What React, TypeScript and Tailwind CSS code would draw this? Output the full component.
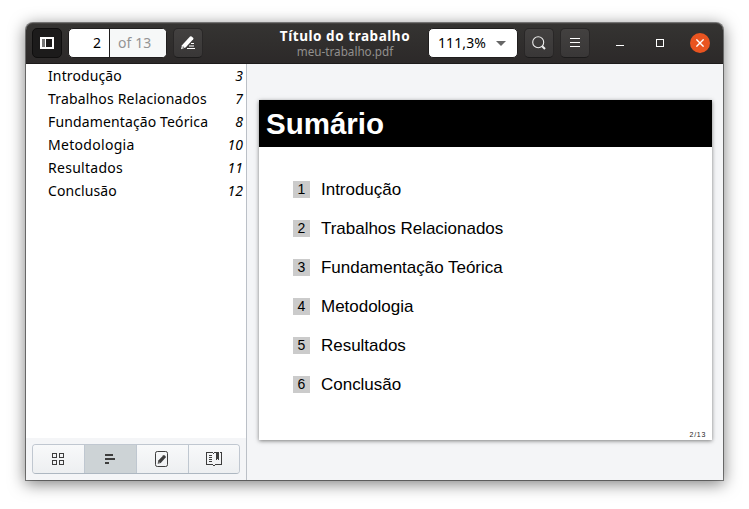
import type { ReactNode } from "react";

const sections = [
  { title: "Introdução", page: 3, side: "tracking-[0.12px]" },
  { title: "Trabalhos Relacionados", page: 7, side: "tracking-[0.17px]" },
  { title: "Fundamentação Teórica", page: 8, side: "tracking-[0.13px]" },
  { title: "Metodologia", page: 10, side: "tracking-[0.3px]" },
  { title: "Resultados", page: 11, side: "tracking-[0.28px]" },
  { title: "Conclusão", page: 12, side: "tracking-[0.1px]" },
];

function HeaderButton({ children, className = "" }: { children: ReactNode; className?: string }) {
  return (
    <button
      className={`flex h-[30px] w-[30px] shrink-0 items-center justify-center rounded-[5px] border border-[#292727] border-b-[#1c1b1b] bg-linear-to-b from-[#434140] to-[#393737] ${className}`}
    >
      {children}
    </button>
  );
}

function Header() {
  return (
    <header className="flex h-[41px] items-start rounded-t-[7px] border-b border-[#1d1b1b] bg-linear-to-b from-[#353432] to-[#2c2929] pt-[5px] pl-[6px] shadow-[inset_0_1px_0_#444240]">
      <button className="flex h-[30px] w-[30px] shrink-0 items-center justify-center rounded-[5px] border border-[#0f0e0e] bg-[#1c1b1b]">
        <svg width="14" height="12" viewBox="0 0 14 12" shapeRendering="crispEdges">
          <path d="M0 0h14v12H0z" fill="#fff" />
          <path d="M2 2h3v8H2z" fill="#777" />
          <path d="M6 2h6v8H6z" fill="#1c1b1b" />
        </svg>
      </button>
      <div className="ml-[6px] flex h-[30px] w-[99px] shrink-0 overflow-hidden rounded-[5px] border border-[#201e1e] bg-white text-[14px] leading-[28px]">
        <div className="w-[41px] border-r border-[#201e1e] pr-[8px] text-right text-black">2</div>
        <div className="flex-1 bg-[#f6f8f8] pl-[8px] text-[#949494] tracking-[0.1px]">of 13</div>
      </div>
      <HeaderButton className="ml-[6px]">
        <svg width="16" height="16" viewBox="0 0 16 16" fill="#fff">
          <path d="M1 14.2 2 10.3 10 1.6q.8-.7 1.6-.1l1.5 1.2q.8.7.1 1.6L5.6 12.6Z" />
          <path d="m2.8 11 1.7 1.5-2 1Z" fill="#777" />
          <path d="M11 8h3v1h-3zM9 10.5h5v1H9zM7 13h8v1H7z" />
        </svg>
      </HeaderButton>
      <div className="ml-[77px] flex w-[130px] shrink-0 flex-col items-center whitespace-nowrap">
        <div className="h-[16px] text-[13.5px] leading-[16px] font-bold tracking-[0.55px] text-white">Título do trabalho</div>
        <div className="h-[15px] text-[11.7px] leading-[15px] text-[#92908e]">meu-trabalho.pdf</div>
      </div>
      <div className="ml-[18px] flex h-[30px] w-[90px] shrink-0 items-center rounded-[5px] border border-[#201e1e] bg-white pl-[9px] text-[14px] leading-[28px] text-black">
        <span className="w-[49px] tracking-[0.1px]">111,3%</span>
        <svg className="ml-[9px]" width="10" height="5" viewBox="0 0 10 5"><path d="M0 0h10L5 5Z" fill="#666" /></svg>
      </div>
      <HeaderButton className="ml-[6px]">
        <svg width="16" height="16" viewBox="0 0 16 16" fill="none" stroke="#eee" strokeWidth="1.1">
          <circle cx="7.2" cy="7.2" r="5.5" />
          <path d="m11.2 11.2 2.8 2.8" strokeWidth="2" />
        </svg>
      </HeaderButton>
      <HeaderButton className="ml-[6px]">
        <svg width="10" height="10" viewBox="0 0 10 10" shapeRendering="crispEdges">
          <path d="M0 0h10v1H0zM0 4h10v1H0zM0 8h10v1H0z" fill="#fff" />
        </svg>
      </HeaderButton>
      <div className="ml-[26px] mt-[17px] h-px w-[8px] bg-white" />
      <div className="ml-[32px] mt-[11px] h-[8px] w-[8px] border border-white" />
      <div className="ml-[26px] mt-[5px] flex h-[20px] w-[20px] items-center justify-center rounded-full bg-[#e95420]">
        <svg width="8" height="8" viewBox="0 0 8 8" stroke="#fff" strokeWidth="1.4"><path d="m.4.4 7.2 7.2M7.6.4.4 7.6" /></svg>
      </div>
    </header>
  );
}

function Tab({ children, active = false }: { children: ReactNode; active?: boolean }) {
  return (
    <button
      className={`flex w-[52px] shrink-0 items-center justify-center border-r border-[#bfc7d0] pr-px last:w-[50px] last:border-r-0 last:pr-0 ${
        active ? "bg-[#cdd3d6]" : "bg-linear-to-b from-[#f8f9fa] to-[#edeff1]"
      }`}
    >
      {children}
    </button>
  );
}

function Sidebar() {
  return (
    <aside className="flex w-[221px] shrink-0 flex-col border-r border-[#bbc0c7] bg-white">
      <ul className="flex-1 pt-px">
        {sections.map((s) => (
          <li key={s.page} className="flex h-[23px] justify-between pr-[3px] pl-[22px] text-[14px] leading-[22px] text-black">
            <span className={s.side}>{s.title}</span>
            <span className="italic">{s.page}</span>
          </li>
        ))}
      </ul>
      <div className="h-[42px] bg-[#f4f5f7] p-[6px]">
        <div className="flex h-[30px] w-[208px] overflow-hidden rounded-[4px] border border-[#c0c7d0] border-b-[#adb7c1]">
          <Tab>
            <svg width="12" height="12" viewBox="0 0 12 12" fill="none" stroke="#3d3d3d" shapeRendering="crispEdges">
              <path d="M.5.5h4v4h-4zM7.5.5h4v4h-4zM.5 7.5h4v4h-4zM7.5 7.5h4v4h-4z" />
            </svg>
          </Tab>
          <Tab active>
            <svg width="10" height="10" viewBox="0 0 10 10" fill="#3d3d3d" shapeRendering="crispEdges">
              <path d="M0 0h8v2H0zM0 4h10v2H0zM0 8h4v2H0z" />
            </svg>
          </Tab>
          <Tab>
            <svg className="mr-px" width="13" height="16" viewBox="0 0 13 16">
              <rect x=".5" y=".5" width="12" height="15" rx="1.8" fill="none" stroke="#3d3d3d" />
              <path d="M2.7 12.7 3.3 9.5 8.5 4.3q.5-.4 1.2.1l1 1q.5.6 0 1.2L5.7 12Z" fill="#3d3d3d" />
              <path d="m3.8 10.2 1.3 1.3-1.5.6Z" fill="#999" />
            </svg>
          </Tab>
          <Tab>
            <svg width="16" height="14" viewBox="0 0 16 14" fill="#3d3d3d" shapeRendering="crispEdges">
              <path d="M0 0h7v1H1v11h6v1H0zM9 12h6V1h-1V0h2v13H9zM7 1h1v1H7zM7 13h2v1H7zM8 0h2v1H8zM10 0h3v8h-1V7h-1v1h-1z" />
              <path d="M3 3h3v1H3zM3 5h3v1H3zM3 7h3v1H3zM3 9h3v1H3z" />
            </svg>
          </Tab>
        </div>
      </div>
    </aside>
  );
}

function Slide() {
  return (
    <section className="flex h-[340px] w-[453px] flex-col bg-white font-['Liberation_Sans',Arial,sans-serif] text-black shadow-[0_1px_4px_rgba(0,0,0,0.5)]">
      <h1 className="h-[47px] bg-black pl-[7px] text-[29.5px] leading-[47px] font-bold text-white">Sumário</h1>
      <ol className="mt-[23px] flex-1">
        {sections.map((s, i) => (
          <li key={s.title} className="flex h-[39px] items-center pl-[34px]">
            <span className="h-[17px] w-[17px] bg-[#cbcbcb] text-center text-[14px] leading-[17px]">{i + 1}</span>
            <span className="ml-[11px] text-[17px] leading-[20px] tracking-[-0.02px]">{s.title}</span>
          </li>
        ))}
      </ol>
      <div className="h-[11px] pr-[6px] text-right text-[7px] leading-[11px] tracking-[0.7px] text-[#222]">2/13</div>
    </section>
  );
}

export default function App() {
  return (
    <div className="h-[509px] w-[749px] overflow-hidden bg-white px-[26px] pt-[23px] font-['Noto_Sans','Open_Sans',sans-serif]">
      <div className="flex h-[457px] w-[697px] flex-col rounded-t-[7px] bg-[#f4f5f7] shadow-[0_0_0_1px_rgba(0,0,0,0.45),0_3px_16px_1px_rgba(0,0,0,0.5)]">
        <Header />
        <div className="flex min-h-0 flex-1">
          <Sidebar />
          <main className="flex-1 pt-[36px] pl-[12px]">
            <Slide />
          </main>
        </div>
      </div>
    </div>
  );
}
